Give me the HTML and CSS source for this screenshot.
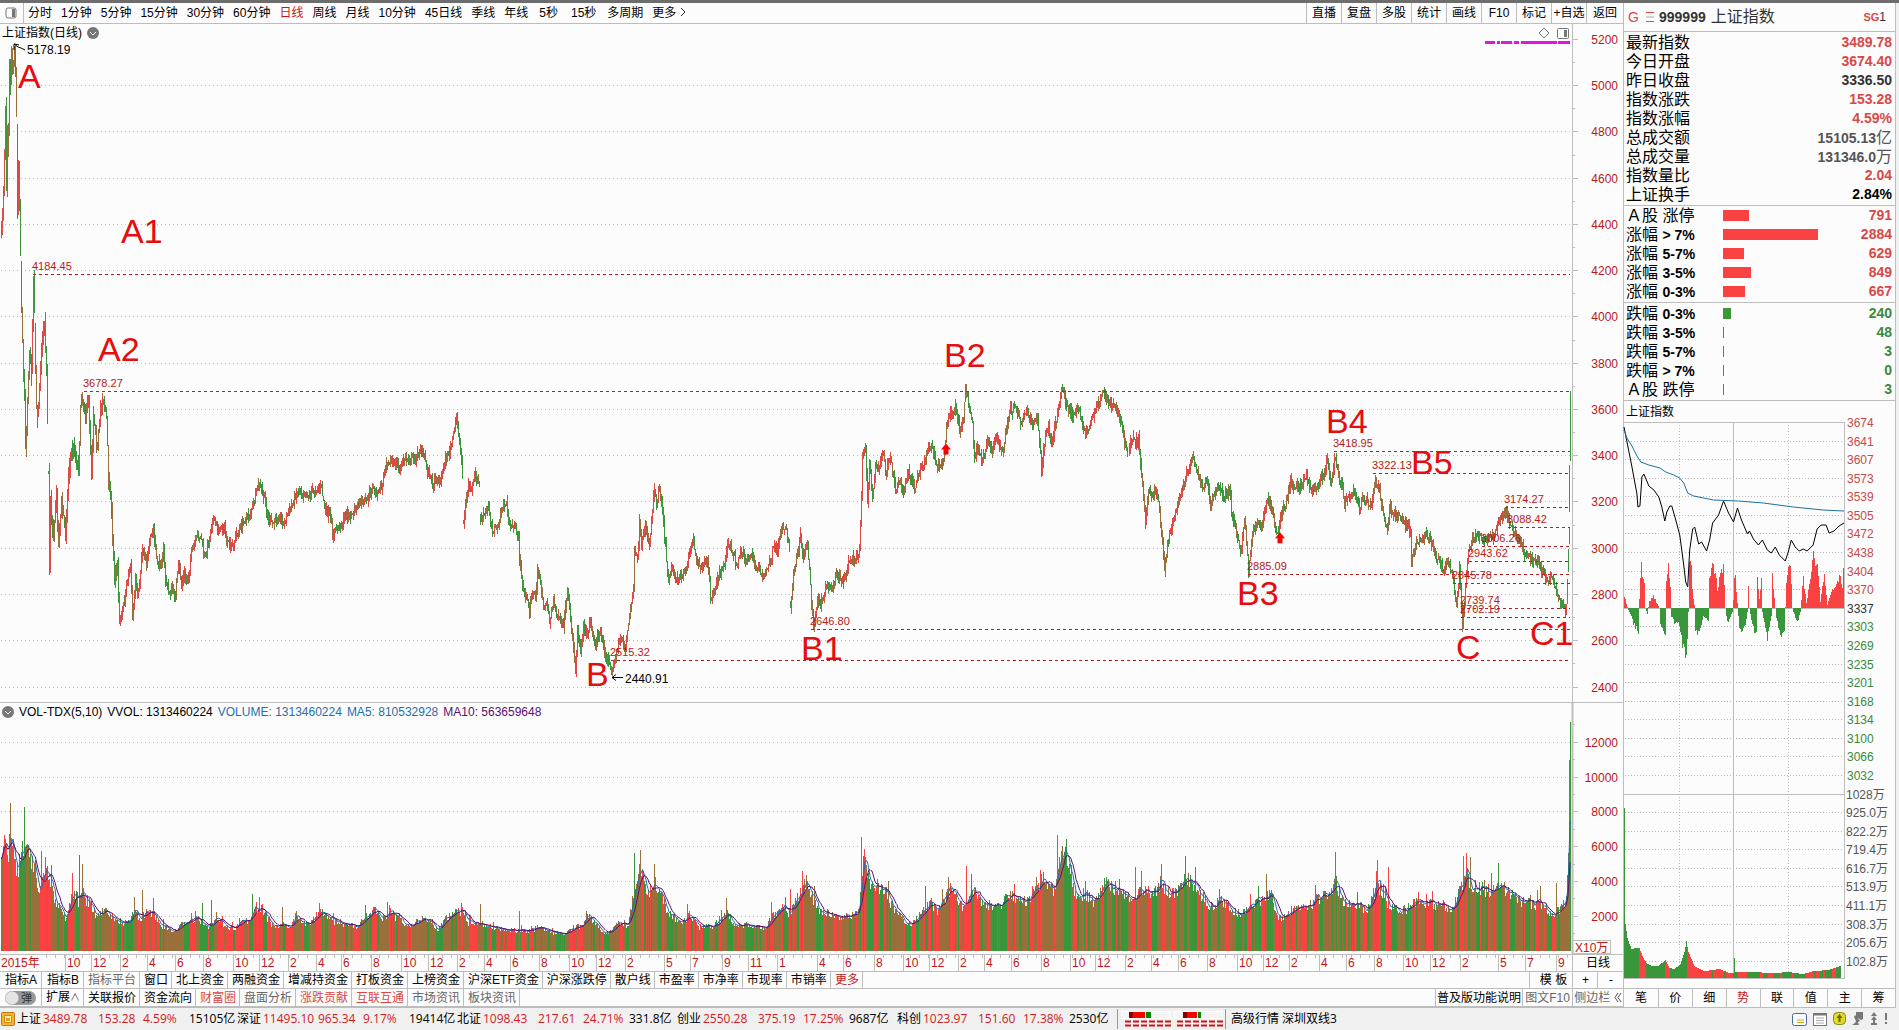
FILE: index.html
```html
<!DOCTYPE html>
<html lang="zh-CN">
<head>
    <meta charset="UTF-8">
    <meta name="viewport" content="width=device-width, initial-scale=1.0">
    <title>上证指数 日线</title>
    <link rel="stylesheet" href="styles.css">
</head>
<body>
    <div class="terminal">
        <main class="left">
            <nav class="toolbar">
                <button class="layout-btn" aria-label="布局">
                    <svg width="12" height="12" viewBox="0 0 12 12"><rect x="1" y="1" width="10" height="10" rx="2" fill="none" stroke="#777"/><rect x="7" y="2" width="3" height="8" fill="#777"/></svg>
                </button>
                <div class="periods">
                    <button>分时</button>
                    <button>1分钟</button>
                    <button>5分钟</button>
                    <button>15分钟</button>
                    <button>30分钟</button>
                    <button>60分钟</button>
                    <button class="active">日线</button>
                    <button>周线</button>
                    <button>月线</button>
                    <button>10分钟</button>
                    <button>45日线</button>
                    <button>季线</button>
                    <button>年线</button>
                    <button class="sec">5秒</button>
                    <button class="sec">15秒</button>
                    <button>多周期</button>
                    <button>更多 <svg width="6" height="10" viewBox="0 0 6 10"><path d="M1 1l4 4-4 4" fill="none" stroke="#222"/></svg></button>
                </div>
                <div class="tools">
                    <button>直播</button>
                    <button>复盘</button>
                    <button>多股</button>
                    <button>统计</button>
                    <button>画线</button>
                    <button>F10</button>
                    <button>标记</button>
                    <button>+自选</button>
                    <button>返回</button>
                </div>
            </nav>

            <section class="price">
                <h1 class="caption">上证指数(日线) <svg class="drop" width="12" height="12" viewBox="0 0 12 12"><circle cx="6" cy="6" r="6" fill="#777"/><path d="M3 5l3 3 3-3" fill="none" stroke="#fff"/></svg></h1>
                <svg id="price-chart"></svg>
            </section>

            <section class="volume">
                <div class="caption">
                    <svg class="drop" width="12" height="12" viewBox="0 0 12 12"><circle cx="6" cy="6" r="6" fill="#777"/><path d="M3 5l3 3 3-3" fill="none" stroke="#fff"/></svg>
                    <span>VOL-TDX(5,10)</span>
                    <span>VVOL: 1313460224</span>
                    <span class="blue">VOLUME: 1313460224</span>
                    <span class="blue">MA5: 810532928</span>
                    <span class="purple">MA10: 563659648</span>
                </div>
                <svg id="volume-chart"></svg>
                <span class="unit">X10万</span>
            </section>

            <div class="dates">
                <svg id="date-axis"></svg>
                <span class="cycle">日线</span>
            </div>

            <div class="tabs">
                <button class="wide">指标A</button>
                <button class="wide">指标B</button>
                <button class="dim">指标平台</button>
                <button>窗口</button>
                <button>北上资金</button>
                <button>两融资金</button>
                <button>增减持资金</button>
                <button>打板资金</button>
                <button>上榜资金</button>
                <button>沪深ETF资金</button>
                <button>沪深涨跌停</button>
                <button>散户线</button>
                <button>市盈率</button>
                <button>市净率</button>
                <button>市现率</button>
                <button>市销率</button>
                <button class="active">更多</button>
                <button class="template">模 板</button>
                <button class="zoom-in">+</button>
                <button class="zoom-out">-</button>
            </div>

            <div class="tabs links">
                <label class="switch"><input type="checkbox"><span>弹</span></label>
                <button class="wide">扩展<small>∧</small></button>
                <button>关联报价</button>
                <button>资金流向</button>
                <button class="red">财富圈</button>
                <button class="dim">盘面分析</button>
                <button class="red">涨跌贡献</button>
                <button class="red">互联互通</button>
                <button class="dim">市场资讯</button>
                <button class="dim">板块资讯</button>
                <button class="help">普及版功能说明</button>
                <button class="dim f10">图文F10</button>
                <button class="dim side">侧边栏 <svg width="8" height="9" viewBox="0 0 8 9"><path d="M4 0L1 4.500l3 4.500M7 0L4 4.500l3 4.500" fill="none" stroke="#555"/></svg></button>
            </div>
        </main>

        <aside class="quote">
            <header class="quote-head">
                <span class="g">G</span>
                <svg width="8" height="10" viewBox="0 0 8 10"><path d="M0 .5h8" stroke="#d44"/><path d="M0 5h8" stroke="#aaa"/><path d="M0 9.500h8" stroke="#2b2"/></svg>
                <b>999999</b>
                <span class="name">上证指数</span>
                <span class="sg"><b>SG</b>1</span>
            </header>
            <table class="figures">
                <tr><th>最新指数</th><td class="up">3489.78</td></tr>
                <tr><th>今日开盘</th><td class="up">3674.40</td></tr>
                <tr><th>昨日收盘</th><td class="flat">3336.50</td></tr>
                <tr><th>指数涨跌</th><td class="up">153.28</td></tr>
                <tr><th>指数涨幅</th><td class="up">4.59%</td></tr>
                <tr><th>总成交额</th><td class="sum">15105.13<i>亿</i></td></tr>
                <tr><th>总成交量</th><td class="sum">131346.0<i>万</i></td></tr>
                <tr><th>指数量比</th><td class="up">2.04</td></tr>
                <tr><th>上证换手</th><td>2.84%</td></tr>
            </table>
            <table class="figures spread up">
                <tr><th>Ａ股 涨停</th><td><div class="bar" style="width:26px"></div></td><td>791</td></tr>
                <tr><th>涨幅 <b>&gt; 7%</b></th><td><div class="bar" style="width:95px"></div></td><td>2884</td></tr>
                <tr><th>涨幅 <b>5-7%</b></th><td><div class="bar" style="width:21px"></div></td><td>629</td></tr>
                <tr><th>涨幅 <b>3-5%</b></th><td><div class="bar" style="width:28px"></div></td><td>849</td></tr>
                <tr><th>涨幅 <b>0-3%</b></th><td><div class="bar" style="width:22px"></div></td><td>667</td></tr>
            </table>
            <table class="figures spread down">
                <tr><th>跌幅 <b>0-3%</b></th><td><div class="bar" style="width:8px"></div></td><td>240</td></tr>
                <tr><th>跌幅 <b>3-5%</b></th><td><div class="bar" style="width:1px"></div></td><td>48</td></tr>
                <tr><th>跌幅 <b>5-7%</b></th><td><div class="bar" style="width:1px"></div></td><td>3</td></tr>
                <tr><th>跌幅 <b>&gt; 7%</b></th><td><div class="bar" style="width:1px"></div></td><td>0</td></tr>
                <tr><th>Ａ股 跌停</th><td><div class="bar" style="width:1px"></div></td><td>3</td></tr>
            </table>
            <h2>上证指数</h2>
            <div class="intraday"><svg id="intraday-chart"></svg></div>
            <nav class="quote-tabs">
                <button>笔</button>
                <button>价</button>
                <button>细</button>
                <button class="active">势</button>
                <button>联</button>
                <button>值</button>
                <button>主</button>
                <button>筹</button>
            </nav>
        </aside>
    </div>

    <footer class="status">
        <svg class="logo" width="14" height="14" viewBox="0 0 14 14"><rect x=".5" y=".5" width="13" height="13" rx="1" fill="#f5b52c" stroke="#b97a12"/><rect x="3.500" y="3.500" width="7" height="7" fill="#fff0b0" stroke="#d08a10"/><rect x="5" y="6" width="4" height="3" fill="#f0a010"/></svg>
        <div class="index"><span>上证</span><em>3489.78</em><em>153.28</em><em>4.59%</em><span>15105亿</span></div>
        <div class="index"><span>深证</span><em>11495.10</em><em>965.34</em><em>9.17%</em><span>19414亿</span></div>
        <div class="index"><span>北证</span><em>1098.43</em><em>217.61</em><em>24.71%</em><span>331.8亿</span></div>
        <div class="index"><span>创业</span><em>2550.28</em><em>375.19</em><em>17.25%</em><span>9687亿</span></div>
        <div class="index"><span>科创</span><em>1023.97</em><em>151.60</em><em>17.38%</em><span>2530亿</span></div>
        <div class="signal">
            <svg width="102" height="16" viewBox="0 0 102 16">
                <path d="M0 .5h49v7h-49zM53 .5h49v7h-49z" fill="#f4f4f4" stroke="#fff"/>
                <path d="M8 1h4v6h-4zM62 1h4v6h-4z" fill="#800"/>
                <path d="M12 1h12v6h-12zM66 1h10v6h-10z" fill="#f00"/>
                <path d="M25 1h5v6h-5zM77 1h3v6h-3z" fill="#080"/>
                <path d="M4 10.500h46M56 10.500h46M4 14.500h46M56 14.500h46" stroke="#d01515" stroke-width="2" stroke-dasharray="6 2"/>
            </svg>
        </div>
        <span class="server">高级行情 深圳双线3</span>
        <div class="tray">
            <svg width="15" height="13" viewBox="0 0 15 13"><rect x=".5" y=".5" width="14" height="12" rx="2" fill="#f7fbff" stroke="#46699c"/><path d="M5 7h7M5 9.500h7" stroke="#d9a520"/></svg>
            <svg width="14" height="13" viewBox="0 0 14 13"><rect x=".5" y=".5" width="13" height="12" fill="#fff" stroke="#777"/><path d="M0 1.500h14" stroke="#777" stroke-width="2"/><path d="M3 5h8M3 7.500h8M3 10h8" stroke="#aaa"/></svg>
            <svg width="13" height="14" viewBox="0 0 13 14"><rect x=".5" y=".5" width="12" height="12" rx="4" fill="#e3d92b" stroke="#8d8610"/><path d="M6.500 2l3 4h-2v4h-2V6h-2z" fill="#6b6400"/></svg>
            <svg width="12" height="14" viewBox="0 0 12 14"><path d="M4 0h7v7l-2 1-5-3zM3 3l5 6-2 1 1 3H0l3-2 1-2-2-4z" fill="#777"/></svg>
            <svg width="8" height="14" viewBox="0 0 8 14"><path d="M4 0l3 4H1zM4 4l3 4H1zM3 8h2v3H3zM1 11h6v2H1z" fill="#777"/></svg>
            <svg width="4" height="14" viewBox="0 0 4 14"><path d="M1 1h2v7H1zM1 10h2v2H1z" fill="#777"/></svg>
        </div>
    </footer>

    <script src="charts.js"></script>
</body>
</html>
```
FILE: styles.css
```css
* {
    box-sizing: border-box;
}

body {
    margin: 0;
    min-height: 100vh;
    display: flex;
    flex-direction: column;
    background: #f0f0f0;
    font: 12px/16px "Liberation Sans", "Noto Sans CJK SC", sans-serif;
    color: #000;
    border-top: 3px solid #6d6d6d;
}

button {
    border: 0;
    padding: 0;
    background: none;
    font: inherit;
    color: inherit;
    white-space: nowrap;
    cursor: pointer;
}

.active {
    color: #c01818;
}

.dim {
    color: #666;
}

.red {
    color: #d94848;
}

.terminal {
    flex: 1;
    display: grid;
    grid-template-columns: minmax(0, 1fr) 273px;
    margin-right: 3px;
    background: #fcfcfc;
    border-bottom: 1px solid #bdbdbd;
}

.left {
    display: flex;
    flex-direction: column;
    min-width: 0;
}

/* toolbar */
.toolbar {
    display: flex;
    height: 21px;
    border-bottom: 1px solid #bdbdbd;
}

.layout-btn {
    display: flex;
    align-items: center;
    width: 24px;
    padding-left: 5px;
    border-right: 1px solid #bdbdbd;
}

.periods {
    display: flex;
    gap: 9px;
    padding-left: 4px;
}

.periods .sec {
    padding: 0 2px;
}

.tools {
    display: flex;
    margin-left: auto;
}

.tools button {
    width: 35px;
    border-left: 1px solid #bdbdbd;
}

.tools button:last-child {
    width: 37px;
}

/* charts */
.price,
.volume {
    position: relative;
    border-bottom: 1px solid #bdbdbd;
}

.price {
    flex: 680 1 0;
}

.volume {
    flex: 252 1 0;
}

.caption {
    position: absolute;
    top: 1px;
    left: 2px;
    display: flex;
    align-items: center;
    gap: 5px;
    margin: 0;
    font-size: 12px;
    font-weight: normal;
}

.blue {
    color: #1f6fa8;
}

.purple {
    color: #5f0f6f;
}

.price > svg,
.volume > svg,
.intraday svg {
    position: absolute;
    top: 0;
    left: 0;
    width: 100%;
    height: 100%;
    overflow: visible;
}

.unit {
    position: absolute;
    right: 12px;
    bottom: 0;
    width: 38px;
    height: 14px;
    padding-left: 2px;
    line-height: 14px;
    border: 1px solid #bdbdbd;
    border-left: 0;
    color: #c01818;
}

.dates {
    display: flex;
    height: 17px;
    border-bottom: 1px solid #bdbdbd;
}

#date-axis {
    flex: 1;
    min-width: 0;
    height: 16px;
}

.cycle {
    width: 51px;
    border-left: 1px solid #bdbdbd;
    text-align: center;
}

/* bottom tabs */
.tabs {
    display: flex;
    height: 17px;
    border-bottom: 1px solid #bdbdbd;
}

.tabs button {
    padding: 0 3px 0 4px;
    border-right: 1px solid #bdbdbd;
}

.tabs .wide,
.switch {
    width: 42px;
}

.tabs .template,
.tabs .help {
    margin-left: auto;
    border-left: 1px solid #bdbdbd;
}

.tabs .template {
    width: 44px;
    padding-left: 8px;
}

.tabs .zoom-in {
    width: 25px;
}

.tabs .zoom-out,
.tabs .side {
    border-right: 0;
}

.tabs .zoom-out {
    width: 25px;
}

.tabs .help {
    padding: 0 1px;
}

.tabs .f10 {
    width: 50px;
    padding: 0;
}

.tabs .side {
    width: 50px;
    padding: 0;
}

.links {
    height: 18px;
}

.tabs small {
    font-size: 10px;
    color: #555;
}

.switch {
    display: flex;
    align-items: center;
    justify-content: center;
    border-right: 1px solid #bdbdbd;
}

.switch span {
    display: flex;
    align-items: center;
    justify-content: flex-end;
    width: 31px;
    height: 14px;
    padding-right: 4px;
    border-radius: 7px;
    background: radial-gradient(circle at 7px 7px, #e4e4e4 6px, #999 7px);
    color: #333;
    font-size: 11px;
}

.switch input {
    position: absolute;
    opacity: 0;
}

/* quote panel */
.quote {
    display: flex;
    flex-direction: column;
    border: solid #bdbdbd;
    border-width: 0 1px;
}

.quote-head {
    display: flex;
    align-items: center;
    height: 29px;
    padding: 0 9px 0 4px;
    border-bottom: 1px solid #bdbdbd;
    font-size: 14px;
    color: #333;
}

.quote-head .g {
    width: 18px;
    color: #d94848;
}

.quote-head svg {
    margin-right: 5px;
}

.quote-head .name {
    margin-left: 5px;
    font-size: 16px;
}

.quote-head .sg {
    margin-left: auto;
    font-size: 12px;
}

.sg b {
    color: #d94848;
    font-size: 11px;
}

.figures {
    width: 100%;
    padding: 1px 3px 1px 2px;
    border-spacing: 0;
    border-bottom: 1px solid #bdbdbd;
}

.spread.up {
    padding-top: 0;
}

.figures tr {
    height: 19px;
}

.figures th,
.figures td {
    padding: 0;
    font-size: 14px;
    line-height: 15px;
}

.figures th {
    width: 97px;
    text-align: left;
    font-size: 16px;
    font-weight: normal;
    white-space: nowrap;
}

.figures th b {
    font-size: 14px;
}

.figures td {
    font-weight: bold;
}

.figures td:last-child {
    text-align: right;
}

.figures .up,
.spread.up td {
    color: #d94848;
}

.figures .flat {
    color: #333;
}

.figures .sum {
    color: #555;
}

.figures i {
    font-size: 16px;
    font-style: normal;
    font-weight: normal;
}

.spread.down td {
    color: #3a8a3a;
}

.bar {
    height: 11px;
    background: #fb4242;
}

.down .bar {
    background: #3a983a;
}

.quote h2 {
    margin: 0;
    padding: 3px 2px 0;
    height: 21px;
    font-size: 12px;
    font-weight: normal;
}

.intraday {
    position: relative;
    flex: 1;
    margin-bottom: 9px;
}

.quote-tabs {
    display: grid;
    grid-template-columns: repeat(8, 1fr);
    height: 19px;
    border-top: 1px solid #bdbdbd;
}

.quote-tabs button + button {
    border-left: 1px solid #bdbdbd;
}

/* status bar */
.status {
    display: flex;
    align-items: center;
    height: 22px;
    font-family: "Open Sans", "Noto Sans CJK SC", sans-serif;
    white-space: nowrap;
}

.logo {
    margin: 0 2px 0 1px;
}

.index {
    display: grid;
    grid-template-columns: 26px 55px 45px 46px 48px;
}

.index em {
    color: #d01c1c;
    font-style: normal;
}

.signal {
    display: flex;
    padding: 2px 2px 2px 3px;
    border: solid #999;
    border-width: 0 1px;
}

.server {
    padding-left: 5px;
}

.tray {
    display: flex;
    align-items: center;
    gap: 6px;
    margin-left: auto;
    padding-right: 11px;
}
```
FILE: charts.js
```js
var RED = '#e04a46';
var GREEN = '#3a963a';
var BROWN = '#9b6f3c';
var LINE = '#bdbdbd';
var AXIS = 51;          // width of the scale on the right
var SPAN = 1572;        // horizontal units of the daily charts

// daily index, [x, y] turning points
var track = [[1,235],[3,190],[4,150],[5,105],[6,205],[7,130],[8,150],[9,60],[10,85],[11,52],[12,70],[14,46],[15,74],[16,130],[17,225],[18,165],[19,200],[20,270],[21,310],[22,345],[24,400],[25,455],[27,400],[29,350],[31,385],[33,280],[36,420],[38,405],[41,345],[44,322],[46,370],[47,434],[48,470],[49,575],[50,500],[53,540],[56,495],[58,548],[61,500],[65,535],[68,475],[71,450],[74,448],[76,460],[78,470],[80,410],[82,397],[85,415],[88,400],[91,468],[93,415],[97,448],[100,410],[103,399],[106,418],[108,480],[110,490],[112,540],[114,578],[117,560],[119,626],[121,615],[124,600],[127,580],[130,567],[132,622],[135,580],[138,594],[142,547],[146,562],[150,540],[153,530],[156,562],[160,565],[163,550],[165,580],[168,593],[171,590],[175,595],[178,565],[181,585],[184,575],[187,583],[190,560],[193,547],[197,537],[201,540],[204,558],[208,545],[212,520],[216,528],[220,530],[224,528],[227,545],[231,548],[236,535],[243,522],[249,515],[254,500],[259,484],[264,500],[268,520],[273,525],[278,514],[283,525],[289,512],[295,495],[300,492],[305,496],[310,494],[314,491],[318,486],[321,490],[325,512],[329,515],[333,537],[337,528],[341,525],[346,515],[352,516],[357,507],[362,503],[366,502],[372,487],[377,495],[382,485],[386,463],[392,462],[399,468],[404,460],[410,461],[416,458],[420,447],[424,457],[427,470],[432,485],[436,480],[440,482],[444,463],[449,452],[454,432],[456,418],[459,440],[462,470],[463,525],[465,505],[468,485],[471,490],[475,475],[479,488],[480,520],[484,515],[488,508],[492,530],[497,528],[502,508],[506,504],[510,530],[514,524],[518,540],[519,560],[522,585],[526,600],[529,610],[532,592],[535,600],[537,573],[540,580],[543,612],[546,600],[549,622],[553,603],[558,620],[563,626],[567,594],[570,620],[573,650],[575,670],[577,630],[580,652],[583,628],[587,635],[590,622],[594,645],[598,635],[602,640],[606,660],[609,665],[612,674],[615,655],[618,645],[621,640],[625,648],[628,625],[631,605],[633,590],[634,555],[637,560],[639,525],[641,550],[645,524],[649,546],[651,520],[654,487],[656,503],[659,488],[661,500],[664,535],[666,560],[668,580],[672,567],[676,578],[682,578],[687,562],[690,550],[693,542],[697,563],[703,568],[707,562],[709,585],[710,600],[714,595],[717,578],[724,565],[728,542],[732,555],[737,567],[740,550],[745,560],[752,555],[755,568],[764,576],[770,562],[773,545],[777,552],[780,532],[785,526],[789,550],[790,610],[793,575],[797,555],[800,538],[803,562],[806,540],[809,570],[812,618],[814,624],[817,600],[820,605],[825,588],[831,590],[836,574],[842,583],[849,562],[855,560],[859,550],[861,500],[862,455],[865,448],[867,500],[869,462],[872,500],[875,467],[879,470],[882,452],[886,473],[890,455],[895,490],[899,480],[903,497],[908,472],[914,488],[919,475],[923,465],[928,450],[931,446],[936,466],[943,462],[946,430],[949,417],[955,407],[959,430],[963,420],[965,386],[968,405],[972,425],[974,458],[977,450],[982,462],[987,440],[992,450],[996,440],[1002,453],[1006,430],[1010,410],[1016,410],[1021,425],[1026,412],[1031,425],[1037,420],[1041,470],[1045,435],[1048,427],[1051,443],[1056,420],[1062,388],[1067,410],[1073,415],[1078,410],[1085,433],[1090,425],[1095,410],[1101,397],[1103,390],[1107,405],[1113,405],[1119,415],[1124,440],[1127,458],[1131,440],[1138,440],[1141,475],[1143,500],[1145,525],[1148,490],[1152,500],[1154,490],[1158,500],[1161,530],[1164,570],[1167,545],[1173,520],[1179,500],[1186,475],[1193,457],[1199,480],[1203,490],[1207,482],[1210,506],[1217,487],[1224,498],[1229,490],[1232,520],[1238,538],[1240,555],[1244,520],[1248,570],[1252,535],[1257,522],[1262,525],[1267,500],[1271,505],[1275,530],[1278,535],[1281,515],[1285,505],[1290,482],[1295,490],[1300,486],[1306,477],[1311,490],[1318,485],[1323,475],[1327,461],[1330,485],[1335,458],[1339,480],[1342,485],[1344,505],[1349,497],[1355,492],[1359,508],[1362,500],[1366,500],[1371,508],[1375,479],[1379,490],[1382,510],[1387,530],[1389,508],[1393,515],[1400,520],[1408,528],[1410,535],[1411,560],[1416,545],[1424,536],[1430,540],[1435,555],[1440,565],[1443,573],[1447,560],[1450,570],[1453,580],[1456,608],[1459,570],[1462,624],[1464,600],[1467,558],[1472,540],[1478,536],[1482,540],[1488,540],[1494,536],[1499,522],[1503,514],[1506,513],[1512,530],[1518,540],[1523,550],[1525,560],[1528,554],[1532,563],[1537,558],[1542,575],[1547,580],[1551,577],[1556,590],[1560,605],[1564,612],[1566,608]];

// sessions that opened away from the previous close
var gaps = [48, 463, 480, 790];

// the last sessions gap up, so they are listed one by one: x, top, bottom, colour
var lastDays = [[1567,580,605,RED],[1568,550,573,GREEN],[1569,466,513,RED],[1569,528,545,RED],[1570,392,462,GREEN]];

var turnover = [[0,80],[4,108],[8,98],[10,122],[13,108],[16,85],[18,85],[22,105],[26,112],[30,92],[35,88],[38,62],[42,70],[46,78],[51,70],[56,45],[60,45],[65,32],[70,52],[74,60],[78,44],[82,60],[86,52],[90,50],[96,35],[100,40],[105,40],[110,36],[115,34],[124,28],[130,33],[135,40],[140,33],[146,40],[154,36],[160,25],[168,23],[175,18],[180,27],[188,27],[196,36],[203,27],[210,25],[216,36],[222,27],[228,25],[234,22],[240,31],[248,31],[254,40],[262,44],[268,31],[275,24],[282,29],[289,22],[296,37],[306,26],[312,31],[320,41],[328,33],[336,29],[346,26],[358,25],[366,35],[376,43],[382,33],[390,39],[400,31],[410,26],[418,32],[428,33],[438,22],[446,34],[454,39],[462,41],[468,28],[476,29],[486,27],[496,24],[508,22],[518,21],[530,20],[540,25],[552,18],[563,17],[575,24],[582,27],[588,36],[594,30],[602,20],[608,19],[616,27],[628,25],[633,60],[640,85],[647,56],[654,74],[662,55],[668,38],[675,33],[682,30],[689,36],[698,25],[712,25],[727,39],[736,25],[750,27],[765,22],[770,33],[782,44],[790,38],[797,54],[806,70],[812,55],[820,38],[830,38],[842,32],[850,37],[858,38],[861,70],[864,102],[870,68],[880,64],[884,62],[892,45],[898,40],[904,28],[914,30],[930,50],[938,40],[950,62],[962,45],[972,63],[982,48],[998,44],[1008,56],[1018,55],[1026,50],[1034,60],[1044,68],[1052,60],[1060,90],[1064,100],[1070,80],[1076,55],[1084,58],[1094,50],[1106,70],[1118,60],[1132,50],[1144,65],[1152,60],[1162,67],[1170,60],[1180,62],[1186,74],[1194,66],[1210,45],[1220,52],[1228,45],[1240,37],[1248,42],[1256,48],[1264,52],[1270,60],[1278,32],[1288,38],[1300,45],[1310,47],[1320,54],[1330,58],[1335,78],[1341,50],[1355,49],[1368,40],[1372,55],[1377,70],[1386,50],[1394,42],[1406,42],[1418,54],[1426,48],[1440,48],[1454,42],[1460,68],[1466,75],[1474,66],[1490,60],[1498,66],[1504,63],[1516,52],[1530,48],[1542,48],[1550,38],[1558,42],[1562,44],[1566,55],[1568,98],[1569,191],[1570,229]];

var spikes = {10:148, 24:144, 41:100, 45:94, 72:78, 79:96, 82:87, 134:54, 142:61, 153:53, 202:48, 211:51, 252:57, 259:54, 282:44, 319:48, 365:46, 387:49, 461:48, 480:47, 519:40, 634:98, 640:101, 654:87, 687:47, 726:53, 771:49, 790:62, 802:80, 861:114, 925:65, 966:85, 1036:74, 1040:81, 1057:116, 1062:105, 1135:84, 1141:80, 1185:95, 1266:77, 1335:99, 1376:80, 1388:84, 1463:95, 1470:94, 1491:78, 1498:88, 1540:65, 1556:68};

var levels = [[4184.45,33],[3678.27,84],[3418.95,1334],[3322.13,1373],[3174.27,1505],[3088.42,1508],[3006.26,1482],[2943.62,1469],[2885.09,1248],[2845.78,1453],[2739.74,1461],[2702.19,1461],[2646.80,811],[2515.32,611]];

var waves = [['A',18,88],['A1',121,243],['A2',98,361],['B',586,687],['B1',801,661],['B2',944,368],['B3',1237,606],['B4',1326,434],['B5',1411,475],['C',1456,660],['C1',1530,646]];

var months = [[65,10],[91,12],[120,2],[147,4],[175,6],[203,8],[233,10],[259,12],[288,2],[316,4],[341,6],[371,8],[401,10],[428,12],[457,2],[484,4],[510,6],[539,8],[569,10],[596,12],[625,2],[664,5],[690,7],[722,9],[748,11],[777,1],[817,4],[843,6],[874,8],[903,10],[929,12],[958,2],[984,4],[1011,6],[1041,8],[1070,10],[1095,12],[1125,2],[1151,4],[1178,6],[1207,8],[1237,10],[1263,12],[1289,2],[1319,4],[1346,6],[1374,8],[1403,10],[1430,12],[1460,2],[1498,5],[1525,7],[1556,9]];

// intraday panel
var quoteLine = [[0,5],[4,25],[8,45],[13,72],[14,85],[16,84],[18,55],[20,52],[25,64],[30,68],[35,75],[38,85],[41,99],[43,90],[46,84],[48,84],[52,98],[56,113],[60,143],[62,160],[64,165],[66,128],[69,107],[71,105],[75,122],[78,120],[83,129],[86,118],[89,101],[95,93],[100,79],[105,91],[110,100],[114,86],[118,98],[124,112],[126,109],[130,117],[135,123],[139,118],[144,128],[148,131],[152,125],[156,133],[162,139],[165,130],[168,118],[172,125],[176,129],[180,127],[184,129],[190,123],[194,107],[198,103],[203,103],[206,111],[211,109],[216,104],[221,101]];
var averageLine = [[0,8],[3,16],[8,24],[13,34],[17,40],[25,43],[36,46],[42,50],[50,53],[56,56],[60,61],[64,71],[70,74],[90,78],[115,79],[140,81],[170,85],[200,88],[221,89]];
var force = [[0,14],[2,5],[4,-2],[7,-10],[10,-20],[14,-26],[15,10],[17,54],[18,40],[20,25],[21,0],[23,-6],[25,8],[29,14],[33,4],[35,0],[36,-20],[41,-27],[42,30],[44,44],[46,20],[47,-10],[51,-18],[55,-18],[58,-40],[62,-55],[64,-5],[65,50],[66,62],[68,20],[70,4],[71,-25],[75,-26],[79,-10],[84,-14],[85,30],[88,50],[91,40],[93,20],[97,40],[99,48],[101,0],[103,-17],[108,-4],[110,20],[112,38],[114,5],[116,-22],[120,-27],[124,-5],[125,25],[126,0],[128,-15],[133,-30],[134,30],[136,10],[138,30],[139,-5],[144,-32],[148,-10],[149,35],[151,10],[153,-10],[157,-32],[161,-28],[163,30],[166,54],[168,30],[169,0],[171,-8],[174,-16],[177,-4],[178,10],[180,33],[183,5],[187,30],[190,56],[194,45],[197,8],[201,35],[204,4],[208,20],[214,32],[217,38],[219,25],[220,48]];
var minutes = [[0,170],[1,54],[3,40],[7,29],[12,30],[15,30],[18,22],[22,15],[28,12],[34,12],[41,18],[45,10],[50,9],[56,14],[60,26],[62,37],[64,26],[70,12],[80,7],[95,9],[105,5],[109,5],[110,20],[111,6],[130,6],[150,5],[165,6],[180,4],[190,7],[205,8],[217,12]];
var quoteScale = ['3674','3641','3607','3573','3539','3505','3472','3438','3404','3370','3337','3303','3269','3235','3201','3168','3134','3100','3066','3032','1028万','925.0万','822.2万','719.4万','616.7万','513.9万','411.1万','308.3万','205.6万','102.8万'];

var seed = 7;

function random() {
    seed = (seed * 16807) % 2147483647;
    return seed / 2147483647;
}

function valueAt(points, x) {
    for (var i = 1; i < points.length; i++) {
        if (x <= points[i][0]) {
            var a = points[i - 1];
            var b = points[i];
            return a[1] + (b[1] - a[1]) * Math.max(0, x - a[0]) / (b[0] - a[0]);
        }
    }
    return points[points.length - 1][1];
}

function line(x1, y1, x2, y2, color, extra) {
    return '<path d="M' + x1 + ' ' + y1 + 'L' + x2 + ' ' + y2 + '" stroke="' + color + '" fill="none" ' + (extra || '') + '/>';
}

function text(x, y, content, color, size, extra) {
    return '<text x="' + x + '" y="' + y + '" fill="' + color + '" font-size="' + size + '" ' + (extra || '') + '>' + content + '</text>';
}

function paths(groups, width) {
    var out = '';
    for (var color in groups) {
        out += '<path d="' + groups[color] + '" stroke="' + color + '" stroke-width="' + width + '" shape-rendering="crispEdges"/>';
    }
    return out;
}

function snap(v) {
    return Math.round(v) + 0.5;
}

function drawPrice() {
    var svg = document.getElementById('price-chart');
    var right = svg.clientWidth - AXIS;
    var kx = right / SPAN;
    var ky = svg.clientHeight / 679;
    var out = '';

    function py(y) {
        return (y - 24) * ky;
    }
    function priceY(p) {
        return py(39.5 + (5200 - p) * 0.2316);
    }

    for (var p = 5200; p >= 2400; p -= 100) {
        var gy = snap(priceY(p) - 0.5);
        if (p % 200 === 0) {
            if (p < 5200) {
                out += line(1, gy, right, gy, '#bbb', 'stroke-dasharray="1 3"');
            }
            out += line(right, gy, right + 6, gy, LINE);
            out += text(svg.clientWidth - 5, gy + 4, p, '#b81818', 12, 'text-anchor="end"');
        } else {
            out += line(right, gy, right + 3, gy, LINE);
        }
    }
    out += line(right + 0.5, 0, right + 0.5, svg.clientHeight, LINE);

    var groups = {};
    groups[RED] = groups[GREEN] = groups[BROWN] = '';
    var prev = track[0][1];
    for (var x = 1; x <= 1566; x++) {
        var mid = valueAt(track, x) + (random() - 0.5) * 7;
        if (gaps.indexOf(x) >= 0) {
            prev = mid;
        }
        var reach = x < 120 ? 11 : 7;
        var top = Math.max(46, Math.min(prev, mid) - random() * reach);
        var bottom = Math.max(prev, mid) + random() * reach;
        var color = mid < prev ? RED : GREEN;
        if (random() < 0.35) {
            color = BROWN;
        }
        // steep early moves overlap less than a full bar
        if (x < 48 && bottom - top > 60) {
            bottom -= 18;
        }
        groups[color] += 'M' + snap(x * kx) + ' ' + py(top).toFixed(1) + 'V' + py(bottom).toFixed(1);
        prev = mid;
    }
    lastDays.forEach(function (d) {
        groups[d[3]] += 'M' + snap(d[0] * kx) + ' ' + py(d[1]) + 'V' + py(d[2]);
    });
    out += paths(groups, 1);

    levels.forEach(function (l) {
        var y = snap(priceY(l[0]) - 0.5);
        out += line(Math.round(l[1] * kx), y, right - 2, y, '#b02020', 'stroke-dasharray="3 3" shape-rendering="crispEdges"');
        out += text(l[1] * kx - 1, y - 5, l[0].toFixed(2), '#b81818', 11);
    });

    waves.forEach(function (w) {
        out += text(w[1] * kx, py(w[2]), w[0], '#e60c10', 34);
    });

    [[946, 445], [1280, 534]].forEach(function (a) {
        out += '<path transform="translate(' + a[0] * kx + ' ' + py(a[1]) + ')" d="M0-1l5 6H2.500v5h-5V5H-5z" fill="#f00"/>';
    });

    out += '<path transform="translate(' + 14 * kx + ' ' + py(44) + ')" d="M0 6V0l5 1M0 0l4 3 3 1 4 2" fill="none" stroke="#000"/>';
    out += text(27 * kx, py(54), '5178.19', '#000', 12);
    out += '<path transform="translate(' + 612 * kx + ' ' + py(678.5) + ')" d="M11 0H0l4-3M0 0l4 3" fill="none" stroke="#000"/>';
    out += text(625 * kx, py(684), '2440.91', '#000', 12);

    [[1485, 1495], [1497, 1500], [1501, 1512], [1514, 1519], [1521, 1557], [1558, 1570]].forEach(function (m) {
        out += line(m[0] * kx, 18.5, m[1] * kx, 18.5, '#e412e4', 'stroke-width="3"');
    });
    out += '<path transform="translate(' + (right - 28) + ' 9)" d="M0-5l5 5-5 5-5-5z" fill="none" stroke="#777"/>';
    out += '<g transform="translate(' + (right - 15) + ' 4)"><rect x=".5" y=".5" width="11" height="10" rx="1" fill="none" stroke="#777"/><rect x="7" y="2" width="3" height="7" fill="#777"/></g>';
    svg.innerHTML = out;
}

function average(values, days) {
    return values.map(function (v, i) {
        var part = values.slice(Math.max(0, i - days + 1), i + 1);
        return part.reduce(function (a, b) { return a + b; }, 0) / part.length;
    });
}

function drawVolume() {
    var svg = document.getElementById('volume-chart');
    var right = svg.clientWidth - AXIS;
    var kx = right / SPAN;
    var ky = svg.clientHeight / 251;
    var base = svg.clientHeight - 3;
    var out = '';

    for (var v = 1000; v <= 13000; v += 1000) {
        var gy = snap(base - v / 2000 * 34.8 * ky - 0.5);
        if (v % 2000 === 0) {
            out += line(1, gy, right, gy, '#bbb', 'stroke-dasharray="1 3"');
            out += line(right, gy, right + 6, gy, LINE);
            out += text(svg.clientWidth - 5, gy + 4, v, '#b81818', 12, 'text-anchor="end"');
        } else {
            out += line(right, gy, right + 3, gy, LINE);
        }
    }
    out += line(right + 0.5, 0, right + 0.5, svg.clientHeight, LINE, 'stroke-width="2"');

    var groups = {};
    groups[BROWN] = groups['#fb4242'] = groups[GREEN] = '';
    var values = [];
    var color = BROWN;
    for (var x = 1; x <= 1570; x++) {
        var h = valueAt(turnover, x);
        if (x < 1566) {
            h *= 0.86 + random() * 0.24;
            if (random() < 0.05) {
                h *= 1.2;
            }
        }
        values.push(h);
        if (spikes[x]) {
            h = spikes[x];
        }
        if (random() < 0.5) {
            var r = random();
            color = r < 0.42 ? BROWN : r < 0.73 ? '#fb4242' : GREEN;
        }
        if (x === 1569) {
            color = '#fb4242';
        }
        if (x === 1570) {
            color = GREEN;
        }
        groups[color] += 'M' + snap(x * kx) + ' ' + base + 'V' + (base - h * ky).toFixed(1);
    }
    out += paths(groups, 1);

    [[5, '#1f6fa8'], [10, '#5f0f6f']].forEach(function (ma) {
        var d = average(values, ma[0]).map(function (h, i) {
            return (i ? 'L' : 'M') + ((i + 1) * kx).toFixed(1) + ' ' + (base - h * ky).toFixed(1);
        }).join('');
        out += '<path d="' + d + '" fill="none" stroke="' + ma[1] + '"/>';
    });
    svg.innerHTML = out;
}

function drawDates() {
    var svg = document.getElementById('date-axis');
    var kx = svg.clientWidth / SPAN;
    var out = text(1, 12, '2015年', '#c01818', 12);
    for (var t = 46; t < SPAN; t += 9) {
        out += line(snap(t * kx), 0, snap(t * kx), 3, LINE);
    }
    months.forEach(function (m) {
        out += line(snap(m[0] * kx), 0, snap(m[0] * kx), 16, LINE);
        out += text(m[0] * kx + 2, 12, m[1], '#c01818', 12);
    });
    svg.innerHTML = out;
}

function drawIntraday() {
    var svg = document.getElementById('intraday-chart');
    var right = svg.clientWidth - 51;
    var height = svg.clientHeight;
    var kx = right / 221;
    var ky = height / 557;
    var out = '';

    quoteScale.forEach(function (label, i) {
        var y = snap(i * 18.58 * ky);
        if (i === 0 || i === 10 || i === 20) {
            out += line(0, y, right, y, LINE);
        } else {
            out += line(1, y, right, y, '#bbb', 'stroke-dasharray="1 2"');
        }
        var color = i < 10 ? '#c84a4a' : i === 10 ? '#333' : i < 20 ? '#3a8a3a' : '#555';
        out += text(right + (i < 20 ? 3 : 2), y + 4, label, color, 12);
    });
    out += line(snap(55 * kx), 0, snap(55 * kx), height, '#bbb', 'stroke-dasharray="1 2"');
    out += line(snap(109 * kx), 0, snap(109 * kx), height, LINE);
    out += line(snap(165 * kx), 0, snap(165 * kx), height, '#bbb', 'stroke-dasharray="1 2"');
    out += line(right + 0.5, 0, right + 0.5, height, LINE);
    out += line(0, height - 0.5, right, height - 0.5, LINE);

    var groups = {};
    groups['#fb4242'] = groups[GREEN] = '';
    var volColor = GREEN;
    for (var x = 0; x < 221; x++) {
        var f = valueAt(force, x) * (0.75 + random() * 0.3);
        groups[f > 0 ? '#fb4242' : GREEN] += 'M' + snap(x * kx) + ' ' + 186 * ky + 'v' + (-f * ky).toFixed(1);
        if (x < 70) {
            volColor = (x >= 15 && x < 22) || (x > 40 && x < 46) || x > 62 ? '#fb4242' : GREEN;
        } else if (random() < 0.4) {
            volColor = random() < 0.55 ? '#fb4242' : GREEN;
        }
        if (x < 218) {
            groups[volColor] += 'M' + snap(x * kx) + ' ' + (height - 1) + 'v' + (-valueAt(minutes, x) * ky).toFixed(1);
        }
    }
    out += paths(groups, 1);

    [[quoteLine, '#000'], [averageLine, '#1f6fa8']].forEach(function (s) {
        var d = s[0].map(function (p, i) {
            return (i ? 'L' : 'M') + p[0] * kx + ' ' + p[1] * ky;
        }).join('');
        out += '<path d="' + d + '" fill="none" stroke="' + s[1] + '"/>';
    });
    svg.innerHTML = out;
}

function draw() {
    seed = 7;
    drawPrice();
    drawVolume();
    drawDates();
    drawIntraday();
}

window.addEventListener('resize', draw);
draw();
```
